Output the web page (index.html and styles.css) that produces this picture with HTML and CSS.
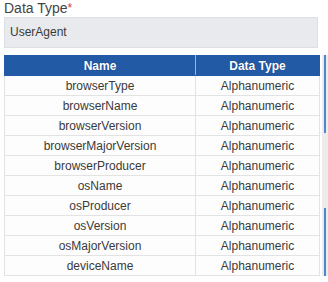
FILE: index.html
```html
<!DOCTYPE html>
<html>
<head>
<meta charset="utf-8">
<link rel="stylesheet" href="styles.css">
</head>
<body>
<div class="field">
  <div class="label">Data Type<span class="req">*</span></div>
  <div class="input">UserAgent</div>
</div>
<div class="tablewrap">
  <table class="grid">
    <thead>
      <tr><th class="c1">Name</th><th class="c2">Data Type</th></tr>
    </thead>
    <tbody>
      <tr><td>browserType</td><td>Alphanumeric</td></tr>
      <tr><td>browserName</td><td>Alphanumeric</td></tr>
      <tr><td>browserVersion</td><td>Alphanumeric</td></tr>
      <tr><td>browserMajorVersion</td><td>Alphanumeric</td></tr>
      <tr><td>browserProducer</td><td>Alphanumeric</td></tr>
      <tr><td>osName</td><td>Alphanumeric</td></tr>
      <tr><td>osProducer</td><td>Alphanumeric</td></tr>
      <tr><td>osVersion</td><td>Alphanumeric</td></tr>
      <tr><td>osMajorVersion</td><td>Alphanumeric</td></tr>
      <tr><td>deviceName</td><td>Alphanumeric</td></tr>
    </tbody>
  </table>
  <div class="scrollbar">
    <div class="thumb t1"></div>
    <div class="gap"></div>
    <div class="thumb t2"></div>
  </div>
</div>
</body>
</html>
```
FILE: styles.css
```css
html, body { margin: 0; padding: 0; background: #fff; }
body {
  font-family: "Liberation Sans", Arial, sans-serif;
  color: #333;
  width: 328px;
  height: 282px;
  overflow: hidden;
}
.field { padding: 0 0 0 4px; }
.label {
  font-size: 14px;
  line-height: 16px;
  color: #444;
}
.req { color: #e0342c; font-size: 12px; vertical-align: top; }
.input {
  margin-top: 1px;
  box-sizing: border-box;
  height: 31px;
  width: 314px;
  background: #e8eaed;
  border: 1px solid #dcdfe3;
  font-size: 12px;
  line-height: 29px;
  padding-left: 5px;
  color: #3a3a3a;
}
.tablewrap {
  display: flex;
  margin-top: 7px;
  padding-left: 4px;
}
.grid {
  border-collapse: collapse;
  width: 316px;
  table-layout: fixed;
  font-size: 12px;
}
.grid th {
  background: #235aa6;
  color: #fff;
  font-weight: bold;
  height: 19px;
  padding: 0;
  border: 1px solid #235aa6;
  border-right-color: #9fb3d3;
  text-shadow: 0 0 1px #0c2d63;
}
.grid th.c2 { border-right-color: #235aa6; }
.grid th.c1 { width: 190px; }
.grid td {
  text-align: center;
  height: 19px;
  padding: 0;
  border: 1px solid #e3e3e3;
  background: #fdfdfd;
  color: #3a3a3a;
}
.scrollbar {
  width: 6px;
  margin-left: 2px;
  height: 221px;
  background: #ececec;
  display: flex;
  flex-direction: column;
  align-items: center;
}
.thumb { width: 2px; background: #4f86cc; }
.t1 { height: 78px; }
.gap { height: 75px; }
.t2 { height: 68px; }
```
